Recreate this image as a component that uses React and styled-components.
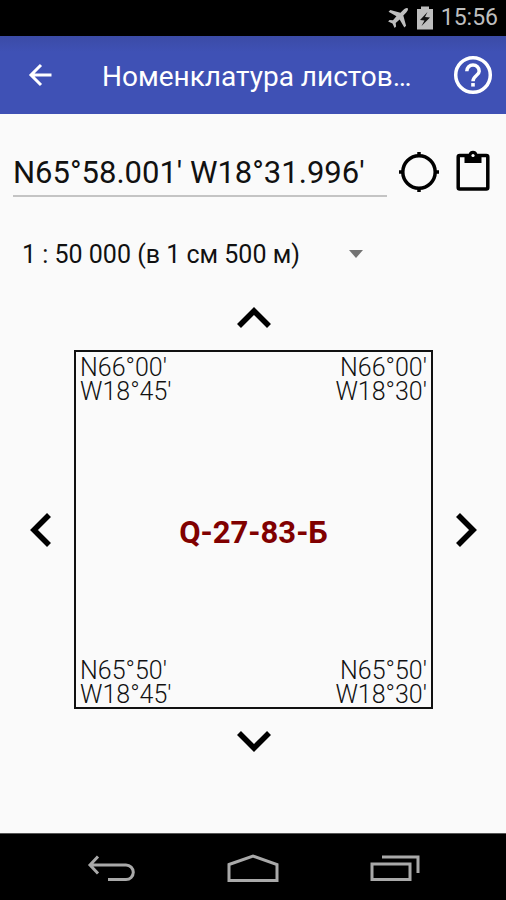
import React, { useState } from "react";
import styled, { createGlobalStyle } from "styled-components";

const GlobalStyle = createGlobalStyle`
  *, *::before, *::after { box-sizing: border-box; }
  body { margin: 0; background: #fafafa; }
  button, input, select { font-family: inherit; color: inherit; }
`;

const Screen = styled.div`
  display: flex;
  flex-direction: column;
  min-height: 100vh;
  background: #fafafa;
  color: #111;
  font-family: Roboto, "Noto Sans", sans-serif;
`;

const StatusBar = styled.div`
  display: flex;
  align-items: center;
  justify-content: flex-end;
  gap: 8px;
  height: 36px;
  padding-right: 8px;
  background: #000;
  color: #bebebe;
`;

const Clock = styled.time`
  font-size: 23px;
  line-height: 36px;
`;

const AppBar = styled.header`
  display: flex;
  align-items: center;
  height: 78px;
  padding: 0 6px 0 13px;
  background: linear-gradient(#3b4ba6, #3f51b5 16px);
  color: #fff;
`;

const Title = styled.h1`
  flex: 1;
  min-width: 0;
  margin: 0 30px 0 35px;
  padding-top: 4px;
  overflow: hidden;
  white-space: nowrap;
  text-overflow: ellipsis;
  font-size: 28px;
  font-weight: 400;
  line-height: 40px;
`;

const IconButton = styled.button`
  display: flex;
  flex: none;
  align-items: center;
  justify-content: center;
  width: 54px;
  height: 48px;
  padding: 0;
  border: 0;
  background: none;
  cursor: pointer;
`;

const Main = styled.main`
  flex: 1;
  padding-top: 34px;
`;

const CoordinateRow = styled.div`
  display: flex;
  padding: 0 6px 0 13px;
`;

const CoordinateInput = styled.input`
  flex: 1;
  min-width: 0;
  height: 49px;
  margin-right: 5px;
  padding: 2px 0 0;
  border: 0;
  border-bottom: 2px solid #c4c4c4;
  outline: 0;
  background: none;
  font-size: 31px;
`;

const ScaleField = styled.div`
  display: grid;
  align-items: center;
  width: 352px;
  max-width: 100%;
  margin: 29px 0 4px 22px;

  > * { grid-area: 1 / 1; }
  > svg { justify-self: end; margin-right: 11px; pointer-events: none; }
`;

const ScaleSelect = styled.select`
  width: 100%;
  height: 56px;
  padding: 0;
  border: 0;
  outline: 0;
  appearance: none;
  background: none;
  font-size: 25px;
`;

const SheetGrid = styled.section`
  display: grid;
  grid-template-columns: 74px minmax(0, 1fr) 73px;
  grid-template-rows: 64px auto 64px;
  grid-template-areas:
    ". north ."
    "west sheet east"
    ". south .";
  place-items: center;
`;

const SIDE_ALIGN = { west: "end", east: "start" };

const MoveButton = styled(IconButton)`
  grid-area: ${(p) => p.$side};
  justify-self: ${(p) => SIDE_ALIGN[p.$side] || "center"};
  width: 66px;
  height: 64px;
`;

const Sheet = styled.div`
  grid-area: sheet;
  display: grid;
  grid-template: auto 1fr auto / 1fr 1fr;
  width: 100%;
  aspect-ratio: 1;
  padding: 4px 4px 0;
  border: 2px solid #111;
`;

const Corner = styled.div`
  text-align: ${(p) => p.$align};
  font-size: 25px;
  font-weight: 300;
  line-height: 24px;
`;

const SheetName = styled.strong`
  grid-column: 1 / -1;
  place-self: center;
  padding-top: 2px;
  color: #800000;
  font-size: 31px;
  font-weight: 700;
  line-height: 36px;
`;

const NavBar = styled.nav`
  display: flex;
  align-items: center;
  justify-content: center;
  gap: 30px;
  height: 67px;
  padding-top: 2px;
  border-top: 1px solid #555;
  background: #000;
`;

const NavButton = styled(IconButton)`
  width: 112px;
  height: 64px;
`;

const CHEVRONS = {
  north: { w: 34, h: 22, points: "2,19 17,4 32,19", label: "Лист севернее" },
  south: { w: 34, h: 22, points: "2,3 17,18 32,3", label: "Лист южнее" },
  west: { w: 22, h: 34, points: "19,2 4,17 19,32", label: "Лист западнее" },
  east: { w: 22, h: 34, points: "3,2 18,17 3,32", label: "Лист восточнее" },
};

function Move({ side }) {
  const c = CHEVRONS[side];
  return (
    <MoveButton $side={side} type="button" aria-label={c.label}>
      <svg width={c.w} height={c.h} fill="none" stroke="#000" strokeWidth="5.600">
        <polyline points={c.points} />
      </svg>
    </MoveButton>
  );
}

function SheetCorner({ align, lat, lon }) {
  return (
    <Corner $align={align}>
      {lat}
      <br />
      {lon}
    </Corner>
  );
}

export default function App() {
  const [coords, setCoords] = useState("N65°58.001' W18°31.996'");
  return (
    <Screen>
      <GlobalStyle />
      <StatusBar>
        <svg width="22" height="22" viewBox="0 0 24 24" fill="#bebebe" aria-hidden="true">
          <path d="M22.6 1.4 C21.4.6 19.6 1.5 18 3L14.7 6.2 3.6 3.2 1.7 5.1 10.3 10.2 6.5 14.5 2.8 14.1 1.2 15.7 6 18 8.3 22.8 9.9 21.2 9.5 17.5 13.8 13.7 18.9 22.3 20.8 20.4 17.8 9.3 21 6C22.5 4.4 23.4 2.6 22.6 1.4Z" />
        </svg>
        <svg width="16" height="24" viewBox="5 1 16 23" aria-hidden="true">
          <path d="M9 1h8v2.500h4V24H5V3.500h4Z" fill="#bebebe" />
          <path d="M15.500 6.500 8 14.500l4.500.5-3 5.500 8.500-8.500-5-.5Z" fill="#111" />
        </svg>
        <Clock>15:56</Clock>
      </StatusBar>
      <AppBar>
        <IconButton type="button" aria-label="Назад">
          <svg width="24" height="24" fill="none" stroke="#fff" strokeWidth="3">
            <path d="M23.500 12H3M13 2 3 12 13 22" />
          </svg>
        </IconButton>
        <Title>Номенклатура листов…</Title>
        <IconButton type="button" aria-label="Справка">
          <svg width="40" height="40" fill="none" stroke="#fff" strokeWidth="3.500">
            <circle cx="20" cy="20" r="17.300" />
            <path d="M13.800 16.200a6.200 6.200 0 1 1 12.400 0c0 4.200-6.200 4.600-6.200 10" />
            <path d="M18.200 29.800h3.600" />
          </svg>
        </IconButton>
      </AppBar>
      <Main>
        <CoordinateRow>
          <CoordinateInput
            aria-label="Координаты"
            value={coords}
            onChange={(e) => setCoords(e.target.value)}
          />
          <IconButton type="button" aria-label="Моё местоположение">
            <svg width="42" height="42" fill="none" stroke="#000" strokeWidth="3.500">
              <circle cx="21" cy="21" r="16.200" />
              <path d="M21 1v5M21 36v5M1 21h5M36 21h5" />
            </svg>
          </IconButton>
          <IconButton type="button" aria-label="Вставить">
            <svg width="36" height="44" fill="none" stroke="#000" strokeWidth="3.500">
              <rect x="3.200" y="5.500" width="29.600" height="33.500" rx="1.500" />
              <path d="M9.500 4h4.200a4.500 4.500 0 0 1 8.600 0h4.200v9h-17Z" fill="#000" stroke="none" />
              <circle cx="18" cy="5.500" r="1.600" fill="#fff" stroke="none" />
            </svg>
          </IconButton>
        </CoordinateRow>
        <ScaleField>
          <ScaleSelect aria-label="Масштаб" defaultValue="50">
            <option value="50">1 : 50 000 (в 1 см 500 м)</option>
            <option value="100">1 : 100 000 (в 1 см 1 км)</option>
          </ScaleSelect>
          <svg width="14" height="8" fill="#737373" aria-hidden="true">
            <path d="M0 0h14L7 8Z" />
          </svg>
        </ScaleField>
        <SheetGrid>
          <Move side="north" />
          <Move side="west" />
          <Sheet>
            <SheetCorner align="left" lat="N66°00'" lon="W18°45'" />
            <SheetCorner align="right" lat="N66°00'" lon="W18°30'" />
            <SheetName>Q-27-83-Б</SheetName>
            <SheetCorner align="left" lat="N65°50'" lon="W18°45'" />
            <SheetCorner align="right" lat="N65°50'" lon="W18°30'" />
          </Sheet>
          <Move side="east" />
          <Move side="south" />
        </SheetGrid>
      </Main>
      <NavBar>
        <NavButton type="button" aria-label="Системная кнопка «Назад»">
          <svg width="48" height="28" fill="none" stroke="#a9a9a9" strokeWidth="3">
            <path d="M3 11H39a7.300 7.300 0 0 1 0 14.600H21M11 2.500 3 11 11 19.500" />
          </svg>
        </NavButton>
        <NavButton type="button" aria-label="Домой">
          <svg width="54" height="30" fill="none" stroke="#a9a9a9" strokeWidth="3">
            <path d="M3 11.500 27 3 51 11.500V27.500H3Z" />
          </svg>
        </NavButton>
        <NavButton type="button" aria-label="Недавние приложения">
          <svg width="50" height="28" fill="none" stroke="#a9a9a9" strokeWidth="3">
            <path d="M2 10H40V25.500H2ZM12 3H48V19" />
          </svg>
        </NavButton>
      </NavBar>
    </Screen>
  );
}
